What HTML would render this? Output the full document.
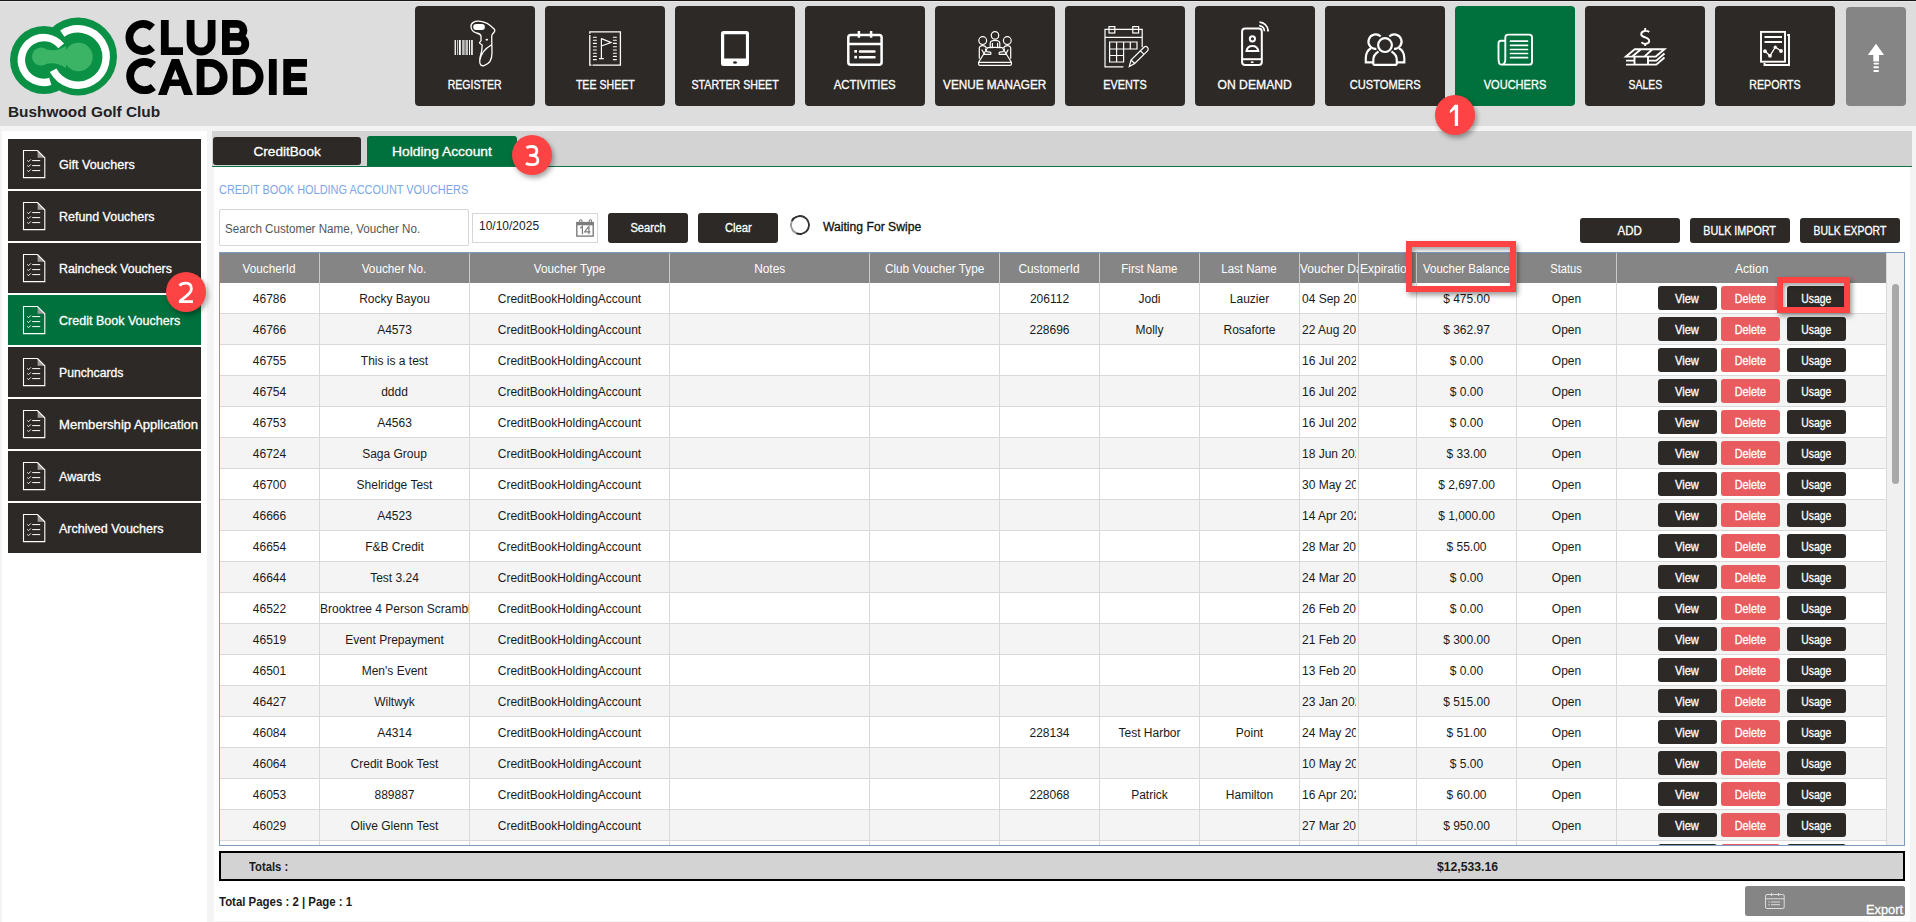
<!DOCTYPE html>
<html><head><meta charset="utf-8"><title>Vouchers</title>
<style>
*{box-sizing:border-box;margin:0;padding:0}
html,body{width:1916px;height:922px;overflow:hidden}
body{position:relative;background:#f4f4f4;font-family:"Liberation Sans",sans-serif;color:#1a1a1a}
div{position:absolute}
#topline{left:0;top:0;width:1916px;height:1px;background:#1b1714}
#hl{left:0;top:1px;width:1916px;height:1px;background:#e9e9e9}
#header{left:0;top:2px;width:1916px;height:124px;background:#dddddd}
#logo{left:0;top:-2px;width:320px;height:100px}
#club{left:8px;top:102px;font-size:14.8px;font-weight:bold;color:#222;white-space:nowrap}
.nav{top:4px;width:120px;height:100px;background:#2d2926;border-radius:4px;color:#fff}
.nav.active{background:#00703c}
.nav .ico{left:0;top:0;width:120px;height:75px}
.nav .ico svg{position:absolute;left:0;top:0}
.nav .lbl{left:0;top:72px;width:120px;text-align:center;font-size:12px;font-weight:bold;white-space:nowrap}
.nav .lbl span{display:inline-block;transform-origin:center}
.navup{left:1846px;top:5px;width:60px;height:99px;background:#858585;border-radius:4px}
#sidepanel{left:2px;top:131px;width:205px;height:791px;background:#fff}
.sb{left:8px;width:193px;height:50px;background:#2d2926;color:#fff;font-size:13px}
.sb.active{background:#00703c}
.sb svg{position:absolute;left:14px;top:11px}
.sb span{position:absolute;left:51px;top:18px;white-space:nowrap;font-weight:normal;-webkit-text-stroke:0.3px #fff;transform-origin:0 50%}
.semi{font-weight:normal;-webkit-text-stroke:0.3px currentColor}
#tabstrip{left:212px;top:131px;width:1700px;height:35px;background:#d3d3d3}
.tab{top:137px;height:29px;color:#fff;font-size:13px;font-weight:bold;text-align:center;line-height:29px;border-radius:3px 3px 0 0}
.tab span{display:inline-block;transform-origin:center}
.t1{left:213px;width:148px;background:#2d2926;height:28px;border-radius:3px}
.t2{left:367px;top:136px;width:150px;height:30px;line-height:31px;background:#00703c}
#greenline{left:212px;top:165.6px;width:1700px;height:1.4px;background:#0d7445}
#content{left:214px;top:167px;width:1696px;height:754px;background:#fff}
#title{left:219px;top:182.5px;font-size:12.3px;color:#7ba6e8;white-space:nowrap}
#search{left:219px;top:209px;width:250px;height:37px;border:1px solid #d6d6d6;border-radius:2px;font-size:12px;color:#555;padding:12px 0 0 5px;white-space:nowrap;background:#fff}
#search span{display:inline-block;transform-origin:0 50%}
#date{left:472px;top:213px;width:126px;height:30px;border:1px solid #d6d6d6;font-size:12px;color:#222;padding:5px 0 0 6px;background:#fff}
#calic{position:absolute;left:103px;top:4px}
.dbtn{background:#2d2926;color:#fff;font-size:12px;font-weight:bold;text-align:center;border-radius:3px;white-space:nowrap}
.dbtn.sm{top:218px;width:100px;height:25px;line-height:26px}
#spin{left:790px;top:215px;width:20px;height:20px;border-radius:50%;border:2.8px solid #333;border-left-color:#999;transform:rotate(-20deg)}
.x{}#swipe{left:823px;top:220px;font-size:12px;font-weight:bold;color:#111;white-space:nowrap}
#grid{left:219px;top:252px;width:1686px;height:594px;border:1px solid #7d9cbd;border-bottom-width:1px;overflow:hidden;background:#fff}
#thead{left:0;top:0;width:1666px;height:30px;background:#858585}
.th{top:0;height:30px;line-height:33px;color:#fff;font-size:12px;border-left:1px solid #c8c8c8;white-space:nowrap;overflow:hidden}
#tbody{left:0;top:0;width:1667px;height:594px}
.tr{left:0;width:1666px;height:31px;border-bottom:1px solid #d9d9d9}
.clip{display:block;overflow:hidden;margin:0 2px}
.td{top:0;height:30px;line-height:32px;font-size:12px;color:#1a1a1a;border-left:1px solid #d9d9d9;white-space:nowrap;overflow:hidden}
.btn{top:2.7px;width:59px;height:24.8px;line-height:26px;font-size:12px;font-weight:bold;text-align:center;color:#fff;border-radius:3px}
.bv,.bu{background:#2d2926}
.bd{background:#e85b5e}
#gutter{left:1666px;top:0;width:19px;height:594px;background:#f0f0f0;border-left:1px solid #d9d9d9}
#thumb{left:5px;top:31px;width:7.4px;height:200px;background:#a9a9a9;border-radius:4px}
#totals{left:219px;top:851px;width:1686px;height:30px;background:#d3d3d3;border:2px solid #000}
#tlbl{position:absolute;left:28px;top:7px;font-size:12px;font-weight:bold}
#tval{position:absolute;left:1215.7px;top:7px;font-size:12px;font-weight:bold}
#pages{left:219px;top:895px;font-size:12px;font-weight:bold;white-space:nowrap}
#exportall{left:1745px;top:886px;width:160px;height:30px;background:#858585;border-radius:2.5px;color:#fff;font-size:13px}
#exportall svg{position:absolute;left:18px;top:6px}
#exportall span{position:absolute;left:60.5px;top:8px}
.annot{border:6px solid #fd4343;box-shadow:2px 3px 5px rgba(0,0,0,0.4), inset 2px 3px 4px rgba(0,0,0,0.35)}
.badge{width:40px;height:40px;border-radius:50%;background:#fd4343;color:#fff;font-size:28px;text-align:center;line-height:40px;box-shadow:2px 3px 5px rgba(0,0,0,0.35)}

</style></head><body>
<div id="topline"></div><div id="hl"></div>
<div id="header">
<div id="logo"><svg width="320" height="100" viewBox="0 0 320 100" style="position:absolute;left:0;top:0">
<g fill="#0a9145"><circle cx="78" cy="56.5" r="39"/><circle cx="44" cy="60" r="34"/></g>
<g fill="none" stroke="#fff" stroke-width="7.5">
<path d="M 62.26 33.66 A 28.15 28.15 0 1 1 53.15 70.22"/>
<path d="M 61.16 45.9 A 22.4 22.4 0 1 0 50.3 81.42"/>
</g>
<g fill="#3bb466">
<circle cx="78.4" cy="57" r="14.3"/><circle cx="41" cy="56.6" r="9"/>
<path d="M41,47.6 Q54,53.5 66,46 L66,68 Q54,60 41,65.6 Z"/>
</g>
<g fill="none" stroke="#000" stroke-width="7.8">
<path d="M 152.3 27.6 A 13.6 13.6 0 1 0 152.3 47.4"/>
<path d="M 164.8 20 V 51.1 H 183"/>
<path d="M 190.6 20 V 41 A 10.5 10.5 0 0 0 211.6 41 V 20"/>
<path d="M 225.9 55 V 23.9 H 237 A 6.5 6.5 0 0 1 237 36.9 H 225.9 M 225.9 36.9 H 238.2 A 7.1 7.1 0 0 1 238.2 51.1 H 225.9"/>
<path d="M 153.4 65.1 A 14.2 14.2 0 1 0 153.4 86.9"/>
<path d="M 200.6 91.1 V 62.9 H 209.6 A 14.1 14.1 0 0 1 209.6 91.1 Z" stroke-linejoin="miter"/>
<path d="M 236.7 91.1 V 62.9 H 245.6 A 14.1 14.1 0 0 1 245.6 91.1 Z" stroke-linejoin="miter"/>
<path d="M 272.8 59 V 95"/>
<path d="M 307 62.9 H 287.2 V 91.1 H 307 M 287.2 77 H 305.5"/>
</g>
<path fill="#000" fill-rule="evenodd" d="M158,95 L171.7,59 L179.2,59 L193,95 L184,95 L180.8,86 L169.8,86 L166.7,95 Z M171.4,79.5 L175.4,69.5 L179.3,79.5 Z"/>
</svg>
</div>
<div id="club"><span style="display:inline-block;transform-origin:0 50%;transform:scaleX(1.040)">Bushwood Golf Club</span></div>
<div class="nav" style="left:415px"><div class="ico"><svg width="120" height="75" viewBox="415 6 120 75"><g fill="#fff"><rect x="454.6" y="40" width="1.3" height="15"/><rect x="457.2" y="40" width="0.7" height="15"/><rect x="458.9" y="40" width="1.9" height="15"/><rect x="462.1" y="40" width="2.6" height="15" opacity=".7"/><rect x="465.4" y="40" width="2.6" height="15" opacity=".7"/><rect x="469" y="40" width="1" height="15"/><rect x="470.9" y="40" width="2" height="15" opacity=".85"/></g>
<path fill="none" stroke="#fff" stroke-width="1.3" stroke-linejoin="round" d="M471,27 C470.5,22.5 475,21 479,21.2 C485,21.5 491,25.5 494.6,29.5 C495.5,30.8 494.5,32 492.5,34 C491.8,34.8 491.7,35.5 491.7,37 L492,53 C492,59 489.5,64 484,65.6 C481,66.3 479.5,64.5 479.7,60 C479.9,56 481.5,53 481.8,50 L482.2,45 C481,44.2 479.5,43.5 479.5,42.7 C479.8,41.8 481,41.5 481,40.5 L481,36 C480.5,34 478,33.3 476.4,33 C473.5,32 471.3,30 471,27 Z M479.8,60.5 C481,53 486,48 491.6,44.8"/>
<rect x="473.2" y="24.1" width="11.7" height="5.9" rx="2.95" fill="#fff"/><ellipse cx="486.8" cy="39.7" rx="1.3" ry="0.9" fill="#fff"/></svg>
</div><div class="lbl"><span style="transform:scaleX(0.879);font-weight:normal;-webkit-text-stroke:0.3px #fff">REGISTER</span></div></div>
<div class="nav" style="left:545px"><div class="ico"><svg width="120" height="75" viewBox="545 6 120 75"><path fill="none" stroke="#fff" stroke-width="1.3" d="M589.8,33.8 V31.8 H620.4 V65.2 H592.5 M589.8,35 V65.2 H591.5"/>
<g stroke="#fff" stroke-width="1.1" stroke-linecap="round"><path d="M593.4,37.2h3 M593.4,40.3h3 M593.4,43.4h3 M593.4,46.7h3 M593.4,50h3 M593.4,53.3h3 M593.4,56.4h3 M593.4,59.6h3 M613.4,37.2h3 M613.4,40.3h3 M613.4,43.4h3 M613.4,46.7h3 M613.4,50h3 M613.4,53.3h3 M613.4,56.4h3 M613.4,59.6h3"/></g>
<path fill="none" stroke="#fff" stroke-width="1.2" d="M601.4,38.3 V58.4 M599,58.6 H603.8 M601.4,38.6 L611,42.5 L601.4,46"/></svg>
</div><div class="lbl"><span style="transform:scaleX(0.883);font-weight:normal;-webkit-text-stroke:0.3px #fff">TEE SHEET</span></div></div>
<div class="nav" style="left:675px"><div class="ico"><svg width="120" height="75" viewBox="675 6 120 75"><path fill="#fff" fill-rule="evenodd" d="M723.5,30.9 H746.5 A2.5,2.5 0 0 1 749,33.4 V63.5 A2.5,2.5 0 0 1 746.5,66 H723.5 A2.5,2.5 0 0 1 721,63.5 V33.4 A2.5,2.5 0 0 1 723.5,30.9 Z M724.2,34.2 V58.6 H745.9 V34.2 Z M733,62.5 A2,1.3 0 1 0 737,62.5 A2,1.3 0 1 0 733,62.5 Z"/></svg>
</div><div class="lbl"><span style="transform:scaleX(0.888);font-weight:normal;-webkit-text-stroke:0.3px #fff">STARTER SHEET</span></div></div>
<div class="nav" style="left:805px"><div class="ico"><svg width="120" height="75" viewBox="805 6 120 75"><g fill="none" stroke="#fff" stroke-width="2.5"><rect x="848.3" y="34.9" width="33.3" height="29.9" rx="2.5"/><path d="M848.3,43.9 H881.6 M858.9,31.1 V37.7 M871.1,31.1 V37.7"/></g>
<g fill="#fff"><rect x="854.3" y="50" width="2.7" height="2.7"/><rect x="854.3" y="55.8" width="2.7" height="2.7"/></g><path stroke="#fff" stroke-width="2.5" stroke-linecap="round" d="M860,51.4 H874.5 M860,57.2 H874.5"/></svg>
</div><div class="lbl"><span style="transform:scaleX(0.949);font-weight:normal;-webkit-text-stroke:0.3px #fff">ACTIVITIES</span></div></div>
<div class="nav" style="left:935px"><div class="ico"><svg width="120" height="75" viewBox="935 6 120 75"><g fill="none" stroke="#fff" stroke-width="1.2" stroke-linejoin="round" stroke-linecap="round"><circle cx="995" cy="35.4" r="3.7"/><circle cx="982.7" cy="40.6" r="3.9"/><circle cx="1007.3" cy="40.6" r="3.9"/>
<path d="M990.2,47.6 V43.2 C990.2,41 992.5,40.3 995,40.3 C997.5,40.3 999.8,41 999.8,43.2 V47.6 M992.4,43.3 V47.6 M997.6,43.3 V47.6"/>
<path d="M987.6,47.7 Q995,47.2 1002.4,47.7 L1011.4,62.3 H978.6 Z M978.6,62.3 V64 Q978.6,65.3 980,65.3 H1010 Q1011.4,65.3 1011.4,64 V62.3"/>
<g><path d="M979.3,58.2 V48.6 C979.3,46.6 980.8,45.7 982.7,45.7 C984.3,45.7 985.5,46.4 986.3,47.6"/><path d="M982,50 L984.5,54.4 H990 C991.3,54.4 991.3,52.4 990,52.2 L987,51.7 L985.4,49"/></g>
<g transform="translate(1990,0) scale(-1,1)"><path d="M979.3,58.2 V48.6 C979.3,46.6 980.8,45.7 982.7,45.7 C984.3,45.7 985.5,46.4 986.3,47.6"/><path d="M982,50 L984.5,54.4 H990 C991.3,54.4 991.3,52.4 990,52.2 L987,51.7 L985.4,49"/></g></g></svg>
</div><div class="lbl"><span style="transform:scaleX(0.980);font-weight:normal;-webkit-text-stroke:0.3px #fff">VENUE MANAGER</span></div></div>
<div class="nav" style="left:1065px"><div class="ico"><svg width="120" height="75" viewBox="1065 6 120 75"><g fill="none" stroke="#fff" stroke-width="1.2"><path d="M1123.4,66.9 H1105 V29.4 H1142.2 V47.3 M1105,37.3 H1142.2"/><rect x="1109" y="26.6" width="5.8" height="6.4"/><rect x="1132.8" y="26.6" width="5.8" height="6.4"/>
<path d="M1109.6,42 H1137 V49 H1109.6 Z M1109.6,49 V62 H1123.6 V42 M1116.6,42 V62 M1109.6,55.5 H1123.6 M1130.3,42 V49"/>
<path d="M1129.3,66.5 L1131,60 L1144,47.3 A2.4,2.4 0 0 1 1147.5,50.8 L1134.7,63.5 Z M1131,60 L1134.7,63.5 M1140.5,50.8 L1144,54.3"/></g></svg>
</div><div class="lbl"><span style="transform:scaleX(0.904);font-weight:normal;-webkit-text-stroke:0.3px #fff">EVENTS</span></div></div>
<div class="nav" style="left:1195px"><div class="ico"><svg width="120" height="75" viewBox="1195 6 120 75"><g fill="none" stroke="#fff" stroke-width="2"><rect x="1242.1" y="28.4" width="19.7" height="36.6" rx="3"/><path d="M1242.1,59.2 H1261.8"/><circle cx="1252.4" cy="38.8" r="2.6"/><path d="M1246.5,51 A6,6 0 0 1 1258.3,51 Z"/>
<path d="M1259.5,22.1 A9,9 0 0 1 1268,30.4" stroke-width="1.6"/><path d="M1259.2,25.6 A6,6 0 0 1 1264.5,31.2" stroke-width="1.6"/></g><circle cx="1268" cy="30.6" r="1.1" fill="#fff"/><ellipse cx="1252.2" cy="62.2" rx="1.5" ry="0.9" fill="#fff"/></svg>
</div><div class="lbl"><span style="transform:scaleX(1.014);font-weight:normal;-webkit-text-stroke:0.3px #fff">ON DEMAND</span></div></div>
<div class="nav" style="left:1325px"><div class="ico"><svg width="120" height="75" viewBox="1325 6 120 75"><g fill="none" stroke="#fff" stroke-width="2.2"><path d="M1380.7,36.5 A7.2,7.2 0 1 0 1376.4,48.8 M1389.3,36.5 A7.2,7.2 0 1 1 1394,48.8"/><circle cx="1385" cy="45.1" r="6.9"/>
<path d="M1373.3,64.8 V60 C1373.3,56 1376,53 1378.5,51.5 M1396.8,64.8 V60 C1396.8,56 1394,53 1391.5,51.5 M1373.3,64.8 H1396.8"/>
<path d="M1373.3,62.3 H1365.8 V58 C1365.8,53 1368.5,49.5 1371,48.2 M1396.8,62.3 H1404.3 V58 C1404.3,53 1401.5,49.5 1399,48.2"/></g></svg>
</div><div class="lbl"><span style="transform:scaleX(0.927);font-weight:normal;-webkit-text-stroke:0.3px #fff">CUSTOMERS</span></div></div>
<div class="nav active" style="left:1455px"><div class="ico"><svg width="120" height="75" viewBox="1455 6 120 75"><g fill="none" stroke="#fff" stroke-width="1.9"><path d="M1508.3,34.6 H1529.3 A2.7,2.7 0 0 1 1532,37.3 V61.9 A2.7,2.7 0 0 1 1529.3,64.6 H1501 C1498.8,64.6 1498.5,62 1498.5,58 V43.5 C1498.5,41.5 1499.5,40.8 1501,40.8 H1505.3 M1505.3,37.6 A3,3 0 0 1 1508.3,34.6 M1505.3,37.6 V59.5 C1505.3,62.5 1504.5,64.6 1501.5,64.6"/></g>
<path stroke="#fff" stroke-width="1.7" stroke-linecap="round" d="M1510.5,41.2 H1527.5 M1510.5,45.3 H1527.5 M1510.5,49.5 H1527.5 M1510.5,53.5 H1527.5 M1510.5,57.7 H1527.5"/></svg>
</div><div class="lbl"><span style="transform:scaleX(0.919);font-weight:normal;-webkit-text-stroke:0.3px #fff">VOUCHERS</span></div></div>
<div class="nav" style="left:1585px"><div class="ico"><svg width="120" height="75" viewBox="1585 6 120 75"><g fill="none" stroke="#fff" stroke-width="1.9"><path d="M1649.2,32 C1647.5,30.5 1641.5,30 1641.2,34.2 C1641,38 1649.2,36.5 1649.2,41 C1649.2,44.5 1643,44.5 1641.5,42.3 M1645.2,28 V30.6 M1645.2,43.8 V46"/>
<path d="M1626,56.6 L1634.8,49.3 H1664.5 L1655.8,56.6 Z M1641,49.3 L1632.2,56.6 M1652.5,49.3 L1644.3,56.6"/>
<path d="M1626,60.6 H1634.5 M1648,60.6 H1656.3 L1664.5,53.5 M1626,64.6 H1634.5 M1648,64.6 H1656.3 L1664.5,57.5 M1634.5,56.6 V65 M1648,56.6 V65 M1634.5,64.6 H1648"/></g></svg>
</div><div class="lbl"><span style="transform:scaleX(0.868);font-weight:normal;-webkit-text-stroke:0.3px #fff">SALES</span></div></div>
<div class="nav" style="left:1715px"><div class="ico"><svg width="120" height="75" viewBox="1715 6 120 75"><g fill="none" stroke="#fff" stroke-width="1.9"><rect x="1761" y="31.9" width="24" height="29.8"/><path d="M1787.2,35 H1789 V65 H1764.5 V63"/></g>
<path stroke="#fff" stroke-width="2" d="M1764.5,37 H1782 M1764.5,42.1 H1782"/><path fill="none" stroke="#fff" stroke-width="1.3" d="M1765,51.2 L1770,55.8 L1775.3,47.2 L1781,51"/><g fill="#fff"><circle cx="1765" cy="51.2" r="1.9"/><circle cx="1770" cy="55.8" r="1.9"/><circle cx="1775.3" cy="47.2" r="1.6"/><circle cx="1781" cy="51" r="1.9"/></g></svg>
</div><div class="lbl"><span style="transform:scaleX(0.888);font-weight:normal;-webkit-text-stroke:0.3px #fff">REPORTS</span></div></div>
<div class="navup"><svg width="60" height="99" viewBox="1846 5 60 99" style="position:absolute;left:0;top:0"><path fill="#fff" d="M1876,41.8 L1884.1,53.1 H1879 V59.5 H1873.3 V53.1 H1867.8 Z"/><rect x="1873.3" y="60.6" width="5.7" height="2.2" rx="1"/><rect x="1873.3" y="64.3" width="5.7" height="2" rx="1" fill="#fff"/><rect x="1873.3" y="67.9" width="5.7" height="2" rx="1" fill="#fff"/><rect x="1873.3" y="60.6" width="5.7" height="2.2" rx="1" fill="#fff"/></svg>
</div>

</div>
<div id="sidepanel"></div>
<div class="sb" style="top:139px"><svg width="30" height="30" viewBox="0 0 30 30" style="position:absolute;left:14px;top:11px"><path fill="#9a9a9a" d="M15.6,0.8 L22.6,7.8 H15.6 Z"/><path fill="none" stroke="#fff" stroke-width="1.1" d="M1.5,0.5 H15.5 L22.8,7.8 V27.6 H1.5 Z"/>
<g fill="none" stroke="#fff" stroke-width="0.9"><path d="M5.2,10.4 L6.6,11.6 L8.8,9.4 M5.2,15.4 L6.6,16.6 L8.8,14.4 M5.2,20.4 L6.6,21.6 L8.8,19.4"/><path d="M10.2,10.6 H18.2 M10.2,15.6 H18.2 M10.2,20.6 H18.2" stroke-width="1"/></g></svg>
<span style="transform:scaleX(0.970)">Gift Vouchers</span></div>
<div class="sb" style="top:191px"><svg width="30" height="30" viewBox="0 0 30 30" style="position:absolute;left:14px;top:11px"><path fill="#9a9a9a" d="M15.6,0.8 L22.6,7.8 H15.6 Z"/><path fill="none" stroke="#fff" stroke-width="1.1" d="M1.5,0.5 H15.5 L22.8,7.8 V27.6 H1.5 Z"/>
<g fill="none" stroke="#fff" stroke-width="0.9"><path d="M5.2,10.4 L6.6,11.6 L8.8,9.4 M5.2,15.4 L6.6,16.6 L8.8,14.4 M5.2,20.4 L6.6,21.6 L8.8,19.4"/><path d="M10.2,10.6 H18.2 M10.2,15.6 H18.2 M10.2,20.6 H18.2" stroke-width="1"/></g></svg>
<span style="transform:scaleX(0.958)">Refund Vouchers</span></div>
<div class="sb" style="top:243px"><svg width="30" height="30" viewBox="0 0 30 30" style="position:absolute;left:14px;top:11px"><path fill="#9a9a9a" d="M15.6,0.8 L22.6,7.8 H15.6 Z"/><path fill="none" stroke="#fff" stroke-width="1.1" d="M1.5,0.5 H15.5 L22.8,7.8 V27.6 H1.5 Z"/>
<g fill="none" stroke="#fff" stroke-width="0.9"><path d="M5.2,10.4 L6.6,11.6 L8.8,9.4 M5.2,15.4 L6.6,16.6 L8.8,14.4 M5.2,20.4 L6.6,21.6 L8.8,19.4"/><path d="M10.2,10.6 H18.2 M10.2,15.6 H18.2 M10.2,20.6 H18.2" stroke-width="1"/></g></svg>
<span style="transform:scaleX(0.952)">Raincheck Vouchers</span></div>
<div class="sb active" style="top:295px"><svg width="30" height="30" viewBox="0 0 30 30" style="position:absolute;left:14px;top:11px"><path fill="#9a9a9a" d="M15.6,0.8 L22.6,7.8 H15.6 Z"/><path fill="none" stroke="#fff" stroke-width="1.1" d="M1.5,0.5 H15.5 L22.8,7.8 V27.6 H1.5 Z"/>
<g fill="none" stroke="#fff" stroke-width="0.9"><path d="M5.2,10.4 L6.6,11.6 L8.8,9.4 M5.2,15.4 L6.6,16.6 L8.8,14.4 M5.2,20.4 L6.6,21.6 L8.8,19.4"/><path d="M10.2,10.6 H18.2 M10.2,15.6 H18.2 M10.2,20.6 H18.2" stroke-width="1"/></g></svg>
<span style="transform:scaleX(0.964)">Credit Book Vouchers</span></div>
<div class="sb" style="top:347px"><svg width="30" height="30" viewBox="0 0 30 30" style="position:absolute;left:14px;top:11px"><path fill="#9a9a9a" d="M15.6,0.8 L22.6,7.8 H15.6 Z"/><path fill="none" stroke="#fff" stroke-width="1.1" d="M1.5,0.5 H15.5 L22.8,7.8 V27.6 H1.5 Z"/>
<g fill="none" stroke="#fff" stroke-width="0.9"><path d="M5.2,10.4 L6.6,11.6 L8.8,9.4 M5.2,15.4 L6.6,16.6 L8.8,14.4 M5.2,20.4 L6.6,21.6 L8.8,19.4"/><path d="M10.2,10.6 H18.2 M10.2,15.6 H18.2 M10.2,20.6 H18.2" stroke-width="1"/></g></svg>
<span style="transform:scaleX(0.939)">Punchcards</span></div>
<div class="sb" style="top:399px"><svg width="30" height="30" viewBox="0 0 30 30" style="position:absolute;left:14px;top:11px"><path fill="#9a9a9a" d="M15.6,0.8 L22.6,7.8 H15.6 Z"/><path fill="none" stroke="#fff" stroke-width="1.1" d="M1.5,0.5 H15.5 L22.8,7.8 V27.6 H1.5 Z"/>
<g fill="none" stroke="#fff" stroke-width="0.9"><path d="M5.2,10.4 L6.6,11.6 L8.8,9.4 M5.2,15.4 L6.6,16.6 L8.8,14.4 M5.2,20.4 L6.6,21.6 L8.8,19.4"/><path d="M10.2,10.6 H18.2 M10.2,15.6 H18.2 M10.2,20.6 H18.2" stroke-width="1"/></g></svg>
<span style="transform:scaleX(1.008)">Membership Application</span></div>
<div class="sb" style="top:451px"><svg width="30" height="30" viewBox="0 0 30 30" style="position:absolute;left:14px;top:11px"><path fill="#9a9a9a" d="M15.6,0.8 L22.6,7.8 H15.6 Z"/><path fill="none" stroke="#fff" stroke-width="1.1" d="M1.5,0.5 H15.5 L22.8,7.8 V27.6 H1.5 Z"/>
<g fill="none" stroke="#fff" stroke-width="0.9"><path d="M5.2,10.4 L6.6,11.6 L8.8,9.4 M5.2,15.4 L6.6,16.6 L8.8,14.4 M5.2,20.4 L6.6,21.6 L8.8,19.4"/><path d="M10.2,10.6 H18.2 M10.2,15.6 H18.2 M10.2,20.6 H18.2" stroke-width="1"/></g></svg>
<span style="transform:scaleX(0.972)">Awards</span></div>
<div class="sb" style="top:503px"><svg width="30" height="30" viewBox="0 0 30 30" style="position:absolute;left:14px;top:11px"><path fill="#9a9a9a" d="M15.6,0.8 L22.6,7.8 H15.6 Z"/><path fill="none" stroke="#fff" stroke-width="1.1" d="M1.5,0.5 H15.5 L22.8,7.8 V27.6 H1.5 Z"/>
<g fill="none" stroke="#fff" stroke-width="0.9"><path d="M5.2,10.4 L6.6,11.6 L8.8,9.4 M5.2,15.4 L6.6,16.6 L8.8,14.4 M5.2,20.4 L6.6,21.6 L8.8,19.4"/><path d="M10.2,10.6 H18.2 M10.2,15.6 H18.2 M10.2,20.6 H18.2" stroke-width="1"/></g></svg>
<span style="transform:scaleX(0.964)">Archived Vouchers</span></div>

<div id="tabstrip"></div>
<div class="tab t1"><span class="semi" style="transform:scaleX(1.046)">CreditBook</span></div>
<div class="tab t2"><span class="semi" style="transform:scaleX(1.062)">Holding Account</span></div>
<div id="greenline"></div>
<div id="content"></div>
<div id="title"><span style="display:inline-block;transform-origin:0 50%;transform:scaleX(0.889)">CREDIT BOOK HOLDING ACCOUNT VOUCHERS</span></div>
<div id="search"><span style="transform:scaleX(0.969)">Search Customer Name, Voucher No.</span></div>
<div id="date">10/10/2025<span id="calic"><svg width="20" height="20" viewBox="576 218 20 20"><g fill="none" stroke="#7d7d7d"><rect x="576.8" y="222.6" width="16.4" height="13.5" stroke-width="1.4"/><path d="M576.8,223.8 H593.2" stroke-width="3"/><path d="M579.6,223 V221 A1.2,1.2 0 0 1 582,221 V223 M589.2,223 V221 A1.2,1.2 0 0 1 591.6,221 V223" stroke-width="1.1"/>
<path d="M580.3,228.2 L582.4,226.4 V234.2" stroke-width="1.2"/><path d="M588.9,234.2 V226.4 L584.6,231.9 H590.4" stroke-width="1.2"/></g></svg>
</span></div>
<div class="dbtn" style="left:608px;top:213px;width:80px;height:30px;line-height:31px"><span style="display:inline-block;font-weight:normal;-webkit-text-stroke:0.3px currentColor;transform-origin:center;transform:scaleX(0.926)">Search</span></div>
<div class="dbtn" style="left:698px;top:213px;width:80px;height:30px;line-height:31px"><span style="display:inline-block;font-weight:normal;-webkit-text-stroke:0.3px currentColor;transform-origin:center;transform:scaleX(0.938)">Clear</span></div>
<div id="spin"></div>
<div id="swipe"><span style="display:inline-block;font-weight:normal;-webkit-text-stroke:0.3px currentColor;transform-origin:0 50%;transform:scaleX(1.013)">Waiting For Swipe</span></div>
<div class="dbtn sm" style="left:1580px"><span style="display:inline-block;font-weight:normal;-webkit-text-stroke:0.3px currentColor;transform-origin:center;transform:scaleX(0.959)">ADD</span></div>
<div class="dbtn sm" style="left:1690px"><span style="display:inline-block;font-weight:normal;-webkit-text-stroke:0.3px currentColor;transform-origin:center;transform:scaleX(0.896)">BULK IMPORT</span></div>
<div class="dbtn sm" style="left:1800px"><span style="display:inline-block;font-weight:normal;-webkit-text-stroke:0.3px currentColor;transform-origin:center;transform:scaleX(0.867)">BULK EXPORT</span></div>
<div id="grid">
<div id="thead"><div class="th" style="left:-1px;width:100px;text-align:center"><span style="display:inline-block;transform-origin:center;transform:scaleX(0.979)">VoucherId</span></div><div class="th" style="left:99px;width:150px;text-align:center"><span style="display:inline-block;transform-origin:center;transform:scaleX(0.980)">Voucher No.</span></div><div class="th" style="left:249px;width:200px;text-align:center"><span style="display:inline-block;transform-origin:center;transform:scaleX(0.977)">Voucher Type</span></div><div class="th" style="left:449px;width:200px;text-align:center"><span style="display:inline-block;transform-origin:center;transform:scaleX(0.989)">Notes</span></div><div class="th" style="left:649px;width:130px;text-align:center"><span style="display:inline-block;transform-origin:center;transform:scaleX(0.982)">Club Voucher Type</span></div><div class="th" style="left:779px;width:100px;text-align:center"><span style="display:inline-block;transform-origin:center;transform:scaleX(0.987)">CustomerId</span></div><div class="th" style="left:879px;width:100px;text-align:center"><span style="display:inline-block;transform-origin:center;transform:scaleX(0.954)">First Name</span></div><div class="th" style="left:979px;width:100px;text-align:center"><span style="display:inline-block;transform-origin:center;transform:scaleX(0.956)">Last Name</span></div><div class="th" style="left:1079px;width:59px;text-align:left">Voucher Date</div><div class="th" style="left:1138px;width:58px"><span class="clip" style="margin:0 10px 0 1px">Expiration</span></div><div class="th" style="left:1196px;width:100px;text-align:center"><span style="display:inline-block;transform-origin:center;transform:scaleX(0.956)">Voucher Balance</span></div><div class="th" style="left:1296px;width:100px;text-align:center"><span style="display:inline-block;transform-origin:center;transform:scaleX(0.929)">Status</span></div><div class="th" style="left:1396px;width:270px;text-align:center"><span style="display:inline-block;transform-origin:center;transform:scaleX(1.004)">Action</span></div></div>
<div id="tbody"><div class="tr" style="top:30px;background:#ffffff"><div class="td" style="left:-1px;width:100px;text-align:center">46786</div><div class="td" style="left:99px;width:150px;text-align:center">Rocky Bayou</div><div class="td" style="left:249px;width:200px;text-align:center">CreditBookHoldingAccount</div><div class="td" style="left:449px;width:200px;text-align:center"></div><div class="td" style="left:649px;width:130px;text-align:center"></div><div class="td" style="left:779px;width:100px;text-align:center">206112</div><div class="td" style="left:879px;width:100px;text-align:center">Jodi</div><div class="td" style="left:979px;width:100px;text-align:center">Lauzier</div><div class="td" style="left:1079px;width:59px"><span class="clip">04 Sep 2025</span></div><div class="td" style="left:1138px;width:58px"><span class="clip"></span></div><div class="td" style="left:1196px;width:100px;text-align:center">$ 475.00</div><div class="td" style="left:1296px;width:100px;text-align:center">Open</div><div class="td" style="left:1396px;width:270px;text-align:center"></div><div class="btn bv" style="left:1437.5px"><span style="display:inline-block;font-weight:normal;-webkit-text-stroke:0.3px currentColor;transform-origin:center;transform:scaleX(0.923)">View</span></div><div class="btn bd" style="left:1500.5px"><span style="display:inline-block;font-weight:normal;-webkit-text-stroke:0.3px currentColor;transform-origin:center;transform:scaleX(0.902)">Delete</span></div><div class="btn bu" style="left:1566.5px"><span style="display:inline-block;font-weight:normal;-webkit-text-stroke:0.3px currentColor;transform-origin:center;transform:scaleX(0.865)">Usage</span></div></div>
<div class="tr" style="top:61px;background:#f4f4f4"><div class="td" style="left:-1px;width:100px;text-align:center">46766</div><div class="td" style="left:99px;width:150px;text-align:center">A4573</div><div class="td" style="left:249px;width:200px;text-align:center">CreditBookHoldingAccount</div><div class="td" style="left:449px;width:200px;text-align:center"></div><div class="td" style="left:649px;width:130px;text-align:center"></div><div class="td" style="left:779px;width:100px;text-align:center">228696</div><div class="td" style="left:879px;width:100px;text-align:center">Molly</div><div class="td" style="left:979px;width:100px;text-align:center">Rosaforte</div><div class="td" style="left:1079px;width:59px"><span class="clip">22 Aug 2025</span></div><div class="td" style="left:1138px;width:58px"><span class="clip"></span></div><div class="td" style="left:1196px;width:100px;text-align:center">$ 362.97</div><div class="td" style="left:1296px;width:100px;text-align:center">Open</div><div class="td" style="left:1396px;width:270px;text-align:center"></div><div class="btn bv" style="left:1437.5px"><span style="display:inline-block;font-weight:normal;-webkit-text-stroke:0.3px currentColor;transform-origin:center;transform:scaleX(0.923)">View</span></div><div class="btn bd" style="left:1500.5px"><span style="display:inline-block;font-weight:normal;-webkit-text-stroke:0.3px currentColor;transform-origin:center;transform:scaleX(0.902)">Delete</span></div><div class="btn bu" style="left:1566.5px"><span style="display:inline-block;font-weight:normal;-webkit-text-stroke:0.3px currentColor;transform-origin:center;transform:scaleX(0.865)">Usage</span></div></div>
<div class="tr" style="top:92px;background:#ffffff"><div class="td" style="left:-1px;width:100px;text-align:center">46755</div><div class="td" style="left:99px;width:150px;text-align:center">This is a test</div><div class="td" style="left:249px;width:200px;text-align:center">CreditBookHoldingAccount</div><div class="td" style="left:449px;width:200px;text-align:center"></div><div class="td" style="left:649px;width:130px;text-align:center"></div><div class="td" style="left:779px;width:100px;text-align:center"></div><div class="td" style="left:879px;width:100px;text-align:center"></div><div class="td" style="left:979px;width:100px;text-align:center"></div><div class="td" style="left:1079px;width:59px"><span class="clip">16 Jul 2025</span></div><div class="td" style="left:1138px;width:58px"><span class="clip"></span></div><div class="td" style="left:1196px;width:100px;text-align:center">$ 0.00</div><div class="td" style="left:1296px;width:100px;text-align:center">Open</div><div class="td" style="left:1396px;width:270px;text-align:center"></div><div class="btn bv" style="left:1437.5px"><span style="display:inline-block;font-weight:normal;-webkit-text-stroke:0.3px currentColor;transform-origin:center;transform:scaleX(0.923)">View</span></div><div class="btn bd" style="left:1500.5px"><span style="display:inline-block;font-weight:normal;-webkit-text-stroke:0.3px currentColor;transform-origin:center;transform:scaleX(0.902)">Delete</span></div><div class="btn bu" style="left:1566.5px"><span style="display:inline-block;font-weight:normal;-webkit-text-stroke:0.3px currentColor;transform-origin:center;transform:scaleX(0.865)">Usage</span></div></div>
<div class="tr" style="top:123px;background:#f4f4f4"><div class="td" style="left:-1px;width:100px;text-align:center">46754</div><div class="td" style="left:99px;width:150px;text-align:center">dddd</div><div class="td" style="left:249px;width:200px;text-align:center">CreditBookHoldingAccount</div><div class="td" style="left:449px;width:200px;text-align:center"></div><div class="td" style="left:649px;width:130px;text-align:center"></div><div class="td" style="left:779px;width:100px;text-align:center"></div><div class="td" style="left:879px;width:100px;text-align:center"></div><div class="td" style="left:979px;width:100px;text-align:center"></div><div class="td" style="left:1079px;width:59px"><span class="clip">16 Jul 2025</span></div><div class="td" style="left:1138px;width:58px"><span class="clip"></span></div><div class="td" style="left:1196px;width:100px;text-align:center">$ 0.00</div><div class="td" style="left:1296px;width:100px;text-align:center">Open</div><div class="td" style="left:1396px;width:270px;text-align:center"></div><div class="btn bv" style="left:1437.5px"><span style="display:inline-block;font-weight:normal;-webkit-text-stroke:0.3px currentColor;transform-origin:center;transform:scaleX(0.923)">View</span></div><div class="btn bd" style="left:1500.5px"><span style="display:inline-block;font-weight:normal;-webkit-text-stroke:0.3px currentColor;transform-origin:center;transform:scaleX(0.902)">Delete</span></div><div class="btn bu" style="left:1566.5px"><span style="display:inline-block;font-weight:normal;-webkit-text-stroke:0.3px currentColor;transform-origin:center;transform:scaleX(0.865)">Usage</span></div></div>
<div class="tr" style="top:154px;background:#ffffff"><div class="td" style="left:-1px;width:100px;text-align:center">46753</div><div class="td" style="left:99px;width:150px;text-align:center">A4563</div><div class="td" style="left:249px;width:200px;text-align:center">CreditBookHoldingAccount</div><div class="td" style="left:449px;width:200px;text-align:center"></div><div class="td" style="left:649px;width:130px;text-align:center"></div><div class="td" style="left:779px;width:100px;text-align:center"></div><div class="td" style="left:879px;width:100px;text-align:center"></div><div class="td" style="left:979px;width:100px;text-align:center"></div><div class="td" style="left:1079px;width:59px"><span class="clip">16 Jul 2025</span></div><div class="td" style="left:1138px;width:58px"><span class="clip"></span></div><div class="td" style="left:1196px;width:100px;text-align:center">$ 0.00</div><div class="td" style="left:1296px;width:100px;text-align:center">Open</div><div class="td" style="left:1396px;width:270px;text-align:center"></div><div class="btn bv" style="left:1437.5px"><span style="display:inline-block;font-weight:normal;-webkit-text-stroke:0.3px currentColor;transform-origin:center;transform:scaleX(0.923)">View</span></div><div class="btn bd" style="left:1500.5px"><span style="display:inline-block;font-weight:normal;-webkit-text-stroke:0.3px currentColor;transform-origin:center;transform:scaleX(0.902)">Delete</span></div><div class="btn bu" style="left:1566.5px"><span style="display:inline-block;font-weight:normal;-webkit-text-stroke:0.3px currentColor;transform-origin:center;transform:scaleX(0.865)">Usage</span></div></div>
<div class="tr" style="top:185px;background:#f4f4f4"><div class="td" style="left:-1px;width:100px;text-align:center">46724</div><div class="td" style="left:99px;width:150px;text-align:center">Saga Group</div><div class="td" style="left:249px;width:200px;text-align:center">CreditBookHoldingAccount</div><div class="td" style="left:449px;width:200px;text-align:center"></div><div class="td" style="left:649px;width:130px;text-align:center"></div><div class="td" style="left:779px;width:100px;text-align:center"></div><div class="td" style="left:879px;width:100px;text-align:center"></div><div class="td" style="left:979px;width:100px;text-align:center"></div><div class="td" style="left:1079px;width:59px"><span class="clip">18 Jun 2025</span></div><div class="td" style="left:1138px;width:58px"><span class="clip"></span></div><div class="td" style="left:1196px;width:100px;text-align:center">$ 33.00</div><div class="td" style="left:1296px;width:100px;text-align:center">Open</div><div class="td" style="left:1396px;width:270px;text-align:center"></div><div class="btn bv" style="left:1437.5px"><span style="display:inline-block;font-weight:normal;-webkit-text-stroke:0.3px currentColor;transform-origin:center;transform:scaleX(0.923)">View</span></div><div class="btn bd" style="left:1500.5px"><span style="display:inline-block;font-weight:normal;-webkit-text-stroke:0.3px currentColor;transform-origin:center;transform:scaleX(0.902)">Delete</span></div><div class="btn bu" style="left:1566.5px"><span style="display:inline-block;font-weight:normal;-webkit-text-stroke:0.3px currentColor;transform-origin:center;transform:scaleX(0.865)">Usage</span></div></div>
<div class="tr" style="top:216px;background:#ffffff"><div class="td" style="left:-1px;width:100px;text-align:center">46700</div><div class="td" style="left:99px;width:150px;text-align:center">Shelridge Test</div><div class="td" style="left:249px;width:200px;text-align:center">CreditBookHoldingAccount</div><div class="td" style="left:449px;width:200px;text-align:center"></div><div class="td" style="left:649px;width:130px;text-align:center"></div><div class="td" style="left:779px;width:100px;text-align:center"></div><div class="td" style="left:879px;width:100px;text-align:center"></div><div class="td" style="left:979px;width:100px;text-align:center"></div><div class="td" style="left:1079px;width:59px"><span class="clip">30 May 2025</span></div><div class="td" style="left:1138px;width:58px"><span class="clip"></span></div><div class="td" style="left:1196px;width:100px;text-align:center">$ 2,697.00</div><div class="td" style="left:1296px;width:100px;text-align:center">Open</div><div class="td" style="left:1396px;width:270px;text-align:center"></div><div class="btn bv" style="left:1437.5px"><span style="display:inline-block;font-weight:normal;-webkit-text-stroke:0.3px currentColor;transform-origin:center;transform:scaleX(0.923)">View</span></div><div class="btn bd" style="left:1500.5px"><span style="display:inline-block;font-weight:normal;-webkit-text-stroke:0.3px currentColor;transform-origin:center;transform:scaleX(0.902)">Delete</span></div><div class="btn bu" style="left:1566.5px"><span style="display:inline-block;font-weight:normal;-webkit-text-stroke:0.3px currentColor;transform-origin:center;transform:scaleX(0.865)">Usage</span></div></div>
<div class="tr" style="top:247px;background:#f4f4f4"><div class="td" style="left:-1px;width:100px;text-align:center">46666</div><div class="td" style="left:99px;width:150px;text-align:center">A4523</div><div class="td" style="left:249px;width:200px;text-align:center">CreditBookHoldingAccount</div><div class="td" style="left:449px;width:200px;text-align:center"></div><div class="td" style="left:649px;width:130px;text-align:center"></div><div class="td" style="left:779px;width:100px;text-align:center"></div><div class="td" style="left:879px;width:100px;text-align:center"></div><div class="td" style="left:979px;width:100px;text-align:center"></div><div class="td" style="left:1079px;width:59px"><span class="clip">14 Apr 2025</span></div><div class="td" style="left:1138px;width:58px"><span class="clip"></span></div><div class="td" style="left:1196px;width:100px;text-align:center">$ 1,000.00</div><div class="td" style="left:1296px;width:100px;text-align:center">Open</div><div class="td" style="left:1396px;width:270px;text-align:center"></div><div class="btn bv" style="left:1437.5px"><span style="display:inline-block;font-weight:normal;-webkit-text-stroke:0.3px currentColor;transform-origin:center;transform:scaleX(0.923)">View</span></div><div class="btn bd" style="left:1500.5px"><span style="display:inline-block;font-weight:normal;-webkit-text-stroke:0.3px currentColor;transform-origin:center;transform:scaleX(0.902)">Delete</span></div><div class="btn bu" style="left:1566.5px"><span style="display:inline-block;font-weight:normal;-webkit-text-stroke:0.3px currentColor;transform-origin:center;transform:scaleX(0.865)">Usage</span></div></div>
<div class="tr" style="top:278px;background:#ffffff"><div class="td" style="left:-1px;width:100px;text-align:center">46654</div><div class="td" style="left:99px;width:150px;text-align:center">F&amp;B Credit</div><div class="td" style="left:249px;width:200px;text-align:center">CreditBookHoldingAccount</div><div class="td" style="left:449px;width:200px;text-align:center"></div><div class="td" style="left:649px;width:130px;text-align:center"></div><div class="td" style="left:779px;width:100px;text-align:center"></div><div class="td" style="left:879px;width:100px;text-align:center"></div><div class="td" style="left:979px;width:100px;text-align:center"></div><div class="td" style="left:1079px;width:59px"><span class="clip">28 Mar 2025</span></div><div class="td" style="left:1138px;width:58px"><span class="clip"></span></div><div class="td" style="left:1196px;width:100px;text-align:center">$ 55.00</div><div class="td" style="left:1296px;width:100px;text-align:center">Open</div><div class="td" style="left:1396px;width:270px;text-align:center"></div><div class="btn bv" style="left:1437.5px"><span style="display:inline-block;font-weight:normal;-webkit-text-stroke:0.3px currentColor;transform-origin:center;transform:scaleX(0.923)">View</span></div><div class="btn bd" style="left:1500.5px"><span style="display:inline-block;font-weight:normal;-webkit-text-stroke:0.3px currentColor;transform-origin:center;transform:scaleX(0.902)">Delete</span></div><div class="btn bu" style="left:1566.5px"><span style="display:inline-block;font-weight:normal;-webkit-text-stroke:0.3px currentColor;transform-origin:center;transform:scaleX(0.865)">Usage</span></div></div>
<div class="tr" style="top:309px;background:#f4f4f4"><div class="td" style="left:-1px;width:100px;text-align:center">46644</div><div class="td" style="left:99px;width:150px;text-align:center">Test 3.24</div><div class="td" style="left:249px;width:200px;text-align:center">CreditBookHoldingAccount</div><div class="td" style="left:449px;width:200px;text-align:center"></div><div class="td" style="left:649px;width:130px;text-align:center"></div><div class="td" style="left:779px;width:100px;text-align:center"></div><div class="td" style="left:879px;width:100px;text-align:center"></div><div class="td" style="left:979px;width:100px;text-align:center"></div><div class="td" style="left:1079px;width:59px"><span class="clip">24 Mar 2025</span></div><div class="td" style="left:1138px;width:58px"><span class="clip"></span></div><div class="td" style="left:1196px;width:100px;text-align:center">$ 0.00</div><div class="td" style="left:1296px;width:100px;text-align:center">Open</div><div class="td" style="left:1396px;width:270px;text-align:center"></div><div class="btn bv" style="left:1437.5px"><span style="display:inline-block;font-weight:normal;-webkit-text-stroke:0.3px currentColor;transform-origin:center;transform:scaleX(0.923)">View</span></div><div class="btn bd" style="left:1500.5px"><span style="display:inline-block;font-weight:normal;-webkit-text-stroke:0.3px currentColor;transform-origin:center;transform:scaleX(0.902)">Delete</span></div><div class="btn bu" style="left:1566.5px"><span style="display:inline-block;font-weight:normal;-webkit-text-stroke:0.3px currentColor;transform-origin:center;transform:scaleX(0.865)">Usage</span></div></div>
<div class="tr" style="top:340px;background:#ffffff"><div class="td" style="left:-1px;width:100px;text-align:center">46522</div><div class="td" style="left:99px;width:150px;text-align:center">Brooktree 4 Person Scramble</div><div class="td" style="left:249px;width:200px;text-align:center">CreditBookHoldingAccount</div><div class="td" style="left:449px;width:200px;text-align:center"></div><div class="td" style="left:649px;width:130px;text-align:center"></div><div class="td" style="left:779px;width:100px;text-align:center"></div><div class="td" style="left:879px;width:100px;text-align:center"></div><div class="td" style="left:979px;width:100px;text-align:center"></div><div class="td" style="left:1079px;width:59px"><span class="clip">26 Feb 2025</span></div><div class="td" style="left:1138px;width:58px"><span class="clip"></span></div><div class="td" style="left:1196px;width:100px;text-align:center">$ 0.00</div><div class="td" style="left:1296px;width:100px;text-align:center">Open</div><div class="td" style="left:1396px;width:270px;text-align:center"></div><div class="btn bv" style="left:1437.5px"><span style="display:inline-block;font-weight:normal;-webkit-text-stroke:0.3px currentColor;transform-origin:center;transform:scaleX(0.923)">View</span></div><div class="btn bd" style="left:1500.5px"><span style="display:inline-block;font-weight:normal;-webkit-text-stroke:0.3px currentColor;transform-origin:center;transform:scaleX(0.902)">Delete</span></div><div class="btn bu" style="left:1566.5px"><span style="display:inline-block;font-weight:normal;-webkit-text-stroke:0.3px currentColor;transform-origin:center;transform:scaleX(0.865)">Usage</span></div></div>
<div class="tr" style="top:371px;background:#f4f4f4"><div class="td" style="left:-1px;width:100px;text-align:center">46519</div><div class="td" style="left:99px;width:150px;text-align:center">Event Prepayment</div><div class="td" style="left:249px;width:200px;text-align:center">CreditBookHoldingAccount</div><div class="td" style="left:449px;width:200px;text-align:center"></div><div class="td" style="left:649px;width:130px;text-align:center"></div><div class="td" style="left:779px;width:100px;text-align:center"></div><div class="td" style="left:879px;width:100px;text-align:center"></div><div class="td" style="left:979px;width:100px;text-align:center"></div><div class="td" style="left:1079px;width:59px"><span class="clip">21 Feb 2025</span></div><div class="td" style="left:1138px;width:58px"><span class="clip"></span></div><div class="td" style="left:1196px;width:100px;text-align:center">$ 300.00</div><div class="td" style="left:1296px;width:100px;text-align:center">Open</div><div class="td" style="left:1396px;width:270px;text-align:center"></div><div class="btn bv" style="left:1437.5px"><span style="display:inline-block;font-weight:normal;-webkit-text-stroke:0.3px currentColor;transform-origin:center;transform:scaleX(0.923)">View</span></div><div class="btn bd" style="left:1500.5px"><span style="display:inline-block;font-weight:normal;-webkit-text-stroke:0.3px currentColor;transform-origin:center;transform:scaleX(0.902)">Delete</span></div><div class="btn bu" style="left:1566.5px"><span style="display:inline-block;font-weight:normal;-webkit-text-stroke:0.3px currentColor;transform-origin:center;transform:scaleX(0.865)">Usage</span></div></div>
<div class="tr" style="top:402px;background:#ffffff"><div class="td" style="left:-1px;width:100px;text-align:center">46501</div><div class="td" style="left:99px;width:150px;text-align:center">Men's Event</div><div class="td" style="left:249px;width:200px;text-align:center">CreditBookHoldingAccount</div><div class="td" style="left:449px;width:200px;text-align:center"></div><div class="td" style="left:649px;width:130px;text-align:center"></div><div class="td" style="left:779px;width:100px;text-align:center"></div><div class="td" style="left:879px;width:100px;text-align:center"></div><div class="td" style="left:979px;width:100px;text-align:center"></div><div class="td" style="left:1079px;width:59px"><span class="clip">13 Feb 2025</span></div><div class="td" style="left:1138px;width:58px"><span class="clip"></span></div><div class="td" style="left:1196px;width:100px;text-align:center">$ 0.00</div><div class="td" style="left:1296px;width:100px;text-align:center">Open</div><div class="td" style="left:1396px;width:270px;text-align:center"></div><div class="btn bv" style="left:1437.5px"><span style="display:inline-block;font-weight:normal;-webkit-text-stroke:0.3px currentColor;transform-origin:center;transform:scaleX(0.923)">View</span></div><div class="btn bd" style="left:1500.5px"><span style="display:inline-block;font-weight:normal;-webkit-text-stroke:0.3px currentColor;transform-origin:center;transform:scaleX(0.902)">Delete</span></div><div class="btn bu" style="left:1566.5px"><span style="display:inline-block;font-weight:normal;-webkit-text-stroke:0.3px currentColor;transform-origin:center;transform:scaleX(0.865)">Usage</span></div></div>
<div class="tr" style="top:433px;background:#f4f4f4"><div class="td" style="left:-1px;width:100px;text-align:center">46427</div><div class="td" style="left:99px;width:150px;text-align:center">Wiltwyk</div><div class="td" style="left:249px;width:200px;text-align:center">CreditBookHoldingAccount</div><div class="td" style="left:449px;width:200px;text-align:center"></div><div class="td" style="left:649px;width:130px;text-align:center"></div><div class="td" style="left:779px;width:100px;text-align:center"></div><div class="td" style="left:879px;width:100px;text-align:center"></div><div class="td" style="left:979px;width:100px;text-align:center"></div><div class="td" style="left:1079px;width:59px"><span class="clip">23 Jan 2025</span></div><div class="td" style="left:1138px;width:58px"><span class="clip"></span></div><div class="td" style="left:1196px;width:100px;text-align:center">$ 515.00</div><div class="td" style="left:1296px;width:100px;text-align:center">Open</div><div class="td" style="left:1396px;width:270px;text-align:center"></div><div class="btn bv" style="left:1437.5px"><span style="display:inline-block;font-weight:normal;-webkit-text-stroke:0.3px currentColor;transform-origin:center;transform:scaleX(0.923)">View</span></div><div class="btn bd" style="left:1500.5px"><span style="display:inline-block;font-weight:normal;-webkit-text-stroke:0.3px currentColor;transform-origin:center;transform:scaleX(0.902)">Delete</span></div><div class="btn bu" style="left:1566.5px"><span style="display:inline-block;font-weight:normal;-webkit-text-stroke:0.3px currentColor;transform-origin:center;transform:scaleX(0.865)">Usage</span></div></div>
<div class="tr" style="top:464px;background:#ffffff"><div class="td" style="left:-1px;width:100px;text-align:center">46084</div><div class="td" style="left:99px;width:150px;text-align:center">A4314</div><div class="td" style="left:249px;width:200px;text-align:center">CreditBookHoldingAccount</div><div class="td" style="left:449px;width:200px;text-align:center"></div><div class="td" style="left:649px;width:130px;text-align:center"></div><div class="td" style="left:779px;width:100px;text-align:center">228134</div><div class="td" style="left:879px;width:100px;text-align:center">Test Harbor</div><div class="td" style="left:979px;width:100px;text-align:center">Point</div><div class="td" style="left:1079px;width:59px"><span class="clip">24 May 2024</span></div><div class="td" style="left:1138px;width:58px"><span class="clip"></span></div><div class="td" style="left:1196px;width:100px;text-align:center">$ 51.00</div><div class="td" style="left:1296px;width:100px;text-align:center">Open</div><div class="td" style="left:1396px;width:270px;text-align:center"></div><div class="btn bv" style="left:1437.5px"><span style="display:inline-block;font-weight:normal;-webkit-text-stroke:0.3px currentColor;transform-origin:center;transform:scaleX(0.923)">View</span></div><div class="btn bd" style="left:1500.5px"><span style="display:inline-block;font-weight:normal;-webkit-text-stroke:0.3px currentColor;transform-origin:center;transform:scaleX(0.902)">Delete</span></div><div class="btn bu" style="left:1566.5px"><span style="display:inline-block;font-weight:normal;-webkit-text-stroke:0.3px currentColor;transform-origin:center;transform:scaleX(0.865)">Usage</span></div></div>
<div class="tr" style="top:495px;background:#f4f4f4"><div class="td" style="left:-1px;width:100px;text-align:center">46064</div><div class="td" style="left:99px;width:150px;text-align:center">Credit Book Test</div><div class="td" style="left:249px;width:200px;text-align:center">CreditBookHoldingAccount</div><div class="td" style="left:449px;width:200px;text-align:center"></div><div class="td" style="left:649px;width:130px;text-align:center"></div><div class="td" style="left:779px;width:100px;text-align:center"></div><div class="td" style="left:879px;width:100px;text-align:center"></div><div class="td" style="left:979px;width:100px;text-align:center"></div><div class="td" style="left:1079px;width:59px"><span class="clip">10 May 2024</span></div><div class="td" style="left:1138px;width:58px"><span class="clip"></span></div><div class="td" style="left:1196px;width:100px;text-align:center">$ 5.00</div><div class="td" style="left:1296px;width:100px;text-align:center">Open</div><div class="td" style="left:1396px;width:270px;text-align:center"></div><div class="btn bv" style="left:1437.5px"><span style="display:inline-block;font-weight:normal;-webkit-text-stroke:0.3px currentColor;transform-origin:center;transform:scaleX(0.923)">View</span></div><div class="btn bd" style="left:1500.5px"><span style="display:inline-block;font-weight:normal;-webkit-text-stroke:0.3px currentColor;transform-origin:center;transform:scaleX(0.902)">Delete</span></div><div class="btn bu" style="left:1566.5px"><span style="display:inline-block;font-weight:normal;-webkit-text-stroke:0.3px currentColor;transform-origin:center;transform:scaleX(0.865)">Usage</span></div></div>
<div class="tr" style="top:526px;background:#ffffff"><div class="td" style="left:-1px;width:100px;text-align:center">46053</div><div class="td" style="left:99px;width:150px;text-align:center">889887</div><div class="td" style="left:249px;width:200px;text-align:center">CreditBookHoldingAccount</div><div class="td" style="left:449px;width:200px;text-align:center"></div><div class="td" style="left:649px;width:130px;text-align:center"></div><div class="td" style="left:779px;width:100px;text-align:center">228068</div><div class="td" style="left:879px;width:100px;text-align:center">Patrick</div><div class="td" style="left:979px;width:100px;text-align:center">Hamilton</div><div class="td" style="left:1079px;width:59px"><span class="clip">16 Apr 2024</span></div><div class="td" style="left:1138px;width:58px"><span class="clip"></span></div><div class="td" style="left:1196px;width:100px;text-align:center">$ 60.00</div><div class="td" style="left:1296px;width:100px;text-align:center">Open</div><div class="td" style="left:1396px;width:270px;text-align:center"></div><div class="btn bv" style="left:1437.5px"><span style="display:inline-block;font-weight:normal;-webkit-text-stroke:0.3px currentColor;transform-origin:center;transform:scaleX(0.923)">View</span></div><div class="btn bd" style="left:1500.5px"><span style="display:inline-block;font-weight:normal;-webkit-text-stroke:0.3px currentColor;transform-origin:center;transform:scaleX(0.902)">Delete</span></div><div class="btn bu" style="left:1566.5px"><span style="display:inline-block;font-weight:normal;-webkit-text-stroke:0.3px currentColor;transform-origin:center;transform:scaleX(0.865)">Usage</span></div></div>
<div class="tr" style="top:557px;background:#f4f4f4"><div class="td" style="left:-1px;width:100px;text-align:center">46029</div><div class="td" style="left:99px;width:150px;text-align:center">Olive Glenn Test</div><div class="td" style="left:249px;width:200px;text-align:center">CreditBookHoldingAccount</div><div class="td" style="left:449px;width:200px;text-align:center"></div><div class="td" style="left:649px;width:130px;text-align:center"></div><div class="td" style="left:779px;width:100px;text-align:center"></div><div class="td" style="left:879px;width:100px;text-align:center"></div><div class="td" style="left:979px;width:100px;text-align:center"></div><div class="td" style="left:1079px;width:59px"><span class="clip">27 Mar 2024</span></div><div class="td" style="left:1138px;width:58px"><span class="clip"></span></div><div class="td" style="left:1196px;width:100px;text-align:center">$ 950.00</div><div class="td" style="left:1296px;width:100px;text-align:center">Open</div><div class="td" style="left:1396px;width:270px;text-align:center"></div><div class="btn bv" style="left:1437.5px"><span style="display:inline-block;font-weight:normal;-webkit-text-stroke:0.3px currentColor;transform-origin:center;transform:scaleX(0.923)">View</span></div><div class="btn bd" style="left:1500.5px"><span style="display:inline-block;font-weight:normal;-webkit-text-stroke:0.3px currentColor;transform-origin:center;transform:scaleX(0.902)">Delete</span></div><div class="btn bu" style="left:1566.5px"><span style="display:inline-block;font-weight:normal;-webkit-text-stroke:0.3px currentColor;transform-origin:center;transform:scaleX(0.865)">Usage</span></div></div>
<div class="tr" style="top:588px;background:#ffffff"><div class="td" style="left:-1px;width:100px;text-align:center">46000</div><div class="td" style="left:99px;width:150px;text-align:center">x</div><div class="td" style="left:249px;width:200px;text-align:center">CreditBookHoldingAccount</div><div class="td" style="left:449px;width:200px;text-align:center"></div><div class="td" style="left:649px;width:130px;text-align:center"></div><div class="td" style="left:779px;width:100px;text-align:center"></div><div class="td" style="left:879px;width:100px;text-align:center"></div><div class="td" style="left:979px;width:100px;text-align:center"></div><div class="td" style="left:1079px;width:59px"><span class="clip">01 Mar 2024</span></div><div class="td" style="left:1138px;width:58px"><span class="clip"></span></div><div class="td" style="left:1196px;width:100px;text-align:center">$ 0.00</div><div class="td" style="left:1296px;width:100px;text-align:center">Open</div><div class="td" style="left:1396px;width:270px;text-align:center"></div><div class="btn bv" style="left:1437.5px"><span style="display:inline-block;font-weight:normal;-webkit-text-stroke:0.3px currentColor;transform-origin:center;transform:scaleX(0.923)">View</span></div><div class="btn bd" style="left:1500.5px"><span style="display:inline-block;font-weight:normal;-webkit-text-stroke:0.3px currentColor;transform-origin:center;transform:scaleX(0.902)">Delete</span></div><div class="btn bu" style="left:1566.5px"><span style="display:inline-block;font-weight:normal;-webkit-text-stroke:0.3px currentColor;transform-origin:center;transform:scaleX(0.865)">Usage</span></div></div>
</div>
<div id="gutter"><div id="thumb"></div></div>
</div>
<div id="totals"><span id="tlbl"><span style="display:inline-block;transform-origin:0 50%;transform:scaleX(0.938)">Totals :</span></span><span id="tval"><span style="display:inline-block;transform-origin:0 50%;transform:scaleX(1.016)">$12,533.16</span></span></div>
<div id="pages"><span style="display:inline-block;transform-origin:0 50%;transform:scaleX(0.952)">Total Pages : 2 | Page : 1</span></div>
<div id="exportall"><svg width="24" height="20" viewBox="1762 891 24 20" style="position:absolute;left:17px;top:5px"><g fill="none" stroke="#ddd" stroke-width="1"><rect x="1765.5" y="894.5" width="18.7" height="14" rx="1.5"/><path d="M1765.5,898.8 H1784.2 M1771.5,893 V896 M1778.5,893 V896 M1771,902 H1780 M1771,904.7 H1780"/></g><g fill="#ddd"><rect x="1768.5" y="901.5" width="1.2" height="1.2"/><rect x="1768.5" y="904.2" width="1.2" height="1.2"/></g></svg>
<span><span style="display:inline-block;font-weight:normal;-webkit-text-stroke:0.3px currentColor;transform-origin:0 50%;transform:scaleX(0.983)">Export All</span></span></div>
<div class="annot" style="left:1406px;top:241px;width:110px;height:51px"></div>
<div class="annot" style="left:1777px;top:277px;width:73px;height:36px"></div>
<div class="badge" style="left:1435px;top:95px"><svg width="40" height="40" viewBox="1435 95 40 40" style="position:absolute;left:0;top:0"><path fill="#fff" d="M1454.8,104.8 H1458.1 V126 H1454.8 V109.6 L1449.9,113.3 V110.4 Z"/></svg></div>
<div class="badge" style="left:166px;top:272px"><svg width="40" height="40" viewBox="166 272 40 40" style="position:absolute;left:0;top:0"><path fill="none" stroke="#fff" stroke-width="2.8" d="M179.6,285.6 C180.8,283.9 183,283.2 185.6,283.2 C189.5,283.2 191.4,285.5 191.4,288.4 C191.4,291.4 189.6,293.3 186.5,295.8 L180.3,301 V301.6 H193"/></svg></div>
<div class="badge" style="left:512px;top:135px"><svg width="40" height="40" viewBox="512 135 40 40" style="position:absolute;left:0;top:0"><path fill="none" stroke="#fff" stroke-width="2.8" d="M526.4,147.9 C527.8,146.8 529.7,146.5 531.6,146.5 C535,146.5 536.8,148.4 536.8,151 C536.8,153.8 534.6,155.4 531.5,155.4 H529.2 M531.5,155.4 C535.4,155.4 537.9,157.4 537.9,160.4 C537.9,163.3 535.5,164.7 531.8,164.7 C529.6,164.7 527.5,164.2 525.9,163.2"/></svg></div>
</body></html>
